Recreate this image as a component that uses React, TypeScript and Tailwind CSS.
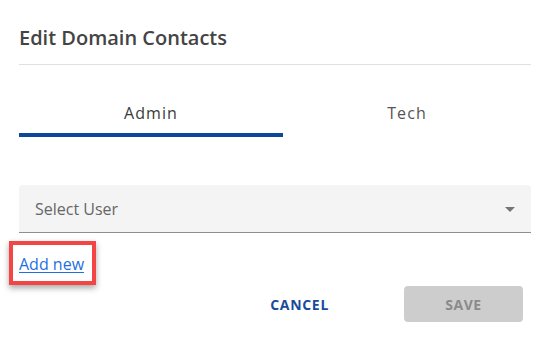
import React from "react";

export default function App() {
  const font = { fontFamily: '"Open Sans", "Noto Sans", sans-serif' };
  return (
    <div
      className="w-[552px] h-[349px] bg-white pl-[19px] pr-[21px] overflow-hidden"
      style={font}
    >
      <div className="pt-[24px]">
        <h2 className="h-[28px] text-[20px] leading-[28px] font-semibold text-[#444444]">
          Edit Domain Contacts
        </h2>
      </div>
      <div className="mt-[12px] h-px bg-[#e0e0e0]" />

      <div className="mt-[24px] flex h-[48px]">
        <button className="relative w-[264px] h-[48px] flex items-center justify-center text-[16px] leading-[24px] font-medium tracking-[1.1px] text-[#3a3a3a]">
          Admin
          <span className="absolute left-0 right-0 bottom-0 h-[4px] bg-[#0d479b]" />
        </button>
        <button className="flex-1 h-[48px] flex items-center justify-center text-[16px] leading-[24px] font-normal tracking-[1.1px] text-[#555555]">
          Tech
        </button>
      </div>

      <div className="mt-[48px] h-[48px] bg-[#f4f4f4] rounded-t-[4px] border-b border-[#8e8e8e] flex items-center justify-between pl-[16px] pr-[16px]">
        <span className="text-[16px] leading-[24px] text-[#666666]">Select User</span>
        <svg width="10" height="5" viewBox="0 0 10 5" className="mt-[1px]">
          <path d="M0 0 L10 0 L5 5 Z" fill="#757575" />
        </svg>
      </div>

      <div className="mt-[19px] h-[24px] flex">
        <span className="relative">
          <a
            href="#"
            className="text-[16px] leading-[24px] text-[#1f6fde] underline underline-offset-[2px]"
          >
            Add new
          </a>
          <span className="absolute top-[-11px] bottom-[-9px] left-[-10px] right-[-12px] border-[4px] border-[#f44545] shadow-[0_3px_6px_rgba(0,0,0,0.35)] pointer-events-none" />
        </span>
      </div>

      <div className="mt-[10px] flex justify-end items-center mr-[8px]">
        <button className="h-[36px] px-[16px] mr-[59px] text-[14px] font-bold tracking-[0.7px] text-[#1a4b9b]">
          CANCEL
        </button>
        <button className="w-[119px] h-[36px] rounded-[4px] bg-[#cdcdcd] text-[14px] font-bold tracking-[0.5px] text-[#8a8a8a]">
          SAVE
        </button>
      </div>
    </div>
  );
}
